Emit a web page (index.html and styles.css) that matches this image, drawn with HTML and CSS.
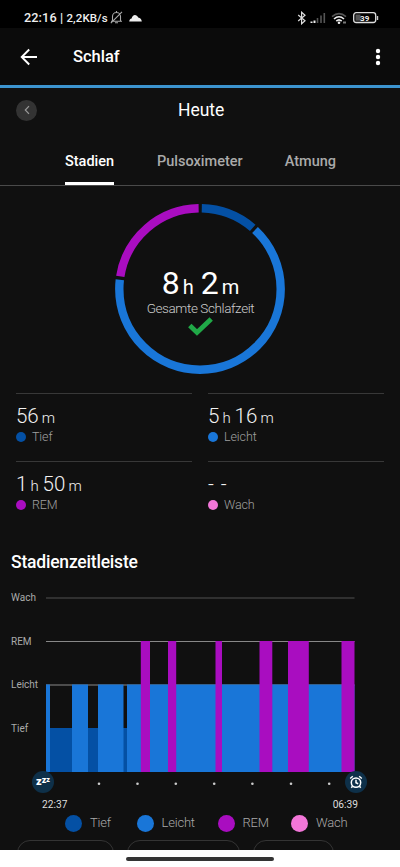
FILE: index.html
```html
<!DOCTYPE html>
<html lang="de">
<head>
<meta charset="utf-8">
<meta name="viewport" content="width=device-width, initial-scale=1">
<title>Schlaf</title>
<link rel="stylesheet" href="styles.css">
</head>
<body>
<div class="screen">
  <header class="status">
    <span class="status-text">22:16 | <span class="rate">2,2KB/s</span></span>
    <svg class="bell" width="13" height="13" viewBox="0 0 13 13" fill="none" stroke="#aaa" stroke-width="1.1"><path d="M2.5 10V5.5a4 4 0 0 1 8 0V10M1 10.2h11M5 11.8h3M6.5 0v1.5M.8 12.2 12 .8"/></svg>
    <svg class="cloud" width="13" height="8" viewBox="0 0 13 8" fill="#eee"><path d="M.2 7.600C.3 5.900 1.200 4.700 2.600 4.500 3.200 2.200 4.400.9 5.900.9c1.500 0 2.600.9 3.300 2.700 2 .3 3.400 1.800 3.600 4z"/></svg>
    <svg class="sys" width="84" height="14" viewBox="0 0 84 14" fill="none">
      <path d="M1.200 4 8 9.800 4.600 12.800V1.200L8 4.200 1.200 10" stroke="#ddd" stroke-width="1.200"/>
      <path d="M14.500 12v-1.500M17.500 12V9.500" stroke="#eee" stroke-width="2"/>
      <path d="M20.500 12V7M24 12V4.500M27.300 12V2" stroke="#555" stroke-width="1.600"/>
      <path d="M35 5.600q7-6 14 0" stroke="#555" stroke-width="1.500"/>
      <path d="M37 8q5-4.500 10 0M39.300 10.200q2.700-2.500 5.400 0" stroke="#eee" stroke-width="1.600"/>
      <circle cx="42" cy="11.800" r="1.300" fill="#eee"/><path d="M46 11.500h3" stroke="#777" stroke-width="2"/>
      <rect x="56.700" y="1.700" width="22" height="9.800" rx="2.500" stroke="#ddd" stroke-width="1.300"/>
      <rect x="58.500" y="3.500" width="5" height="6.200" fill="#555"/>
      <path d="M80.500 5v4" stroke="#ccc" stroke-width="1.400"/>
      <text class="battery-text" x="67.700" y="9.500" text-anchor="middle">39</text>
    </svg>
  </header>

  <div class="appbar">
    <svg width="18" height="18" viewBox="0 0 18 18" fill="none" stroke="#fff" stroke-width="1.900"><path d="M17 9H2M9.200 1.500 1.700 9l7.500 7.500"/></svg>
    <h1>Schlaf</h1>
    <svg class="more" width="6" height="18" viewBox="0 0 6 18" fill="#fff"><circle cx="3" cy="3" r="2.200"/><circle cx="3" cy="9" r="2.200"/><circle cx="3" cy="15" r="2.200"/></svg>
  </div>

  <div class="day">
    <span class="prev"><svg width="6" height="10" viewBox="0 0 6 10" fill="none" stroke="#999" stroke-width="1.200"><path d="M5 1.200 1.300 5 5 8.800"/></svg></span>
    <span class="today">Heute</span>
  </div>

  <nav class="tabs">
    <span class="tab active">Stadien</span>
    <span class="tab">Pulsoximeter</span>
    <span class="tab">Atmung</span>
  </nav>

  <section class="total">
    <svg class="ring" width="170" height="170" viewBox="-85 -85 170 170" fill="none" stroke-width="8.400">
      <g transform="rotate(-90)">
        <circle r="80.700" pathLength="360" stroke="#0450a4" stroke-dasharray="39.500 320.500" stroke-dashoffset="-1.300"/>
        <circle r="80.700" pathLength="360" stroke="#1976d8" stroke-dasharray="233.600 126.400" stroke-dashoffset="-43"/>
        <circle r="80.700" pathLength="360" stroke="#a90dc0" stroke-dasharray="80 280" stroke-dashoffset="-279"/>
      </g>
    </svg>
    <div class="total-text">
      <div class="big">8<small>h</small> 2<small>m</small></div>
      <div class="caption">Gesamte Schlafzeit</div>
      <svg class="check" width="25" height="19" viewBox="0 0 25 19" fill="none" stroke="#20a847" stroke-width="4.800"><path d="M1.800 8.500 9 15.500 23.200 2"/></svg>
    </div>
  </section>

  <section class="stats">
    <div class="stat"><div class="val">56<small>m</small></div><div class="lab"><i class="deep"></i>Tief</div></div>
    <div class="stat"><div class="val">5<small>h</small> 16<small>m</small></div><div class="lab"><i class="light"></i>Leicht</div></div>
    <div class="stat"><div class="val">1<small>h</small> 50<small>m</small></div><div class="lab"><i class="rem"></i>REM</div></div>
    <div class="stat"><div class="val none">- -</div><div class="lab"><i class="awake"></i>Wach</div></div>
  </section>

  <h2>Stadienzeitleiste</h2>

  <section class="chart">
    <div class="axis"><span>Wach</span><span>REM</span><span>Leicht</span><span>Tief</span></div>
    <div class="plot">
      <svg width="309" height="175" viewBox="0 0 309 175">
        <path d="M0 1h308.500" stroke="#505050"/>
        <path d="M0 44.500h308.500M0 88h308.500" stroke="#888"/>
        <g fill="#0450a4"><path d="M4 131h22v44H4zM42 131h10v44H42zM77 131h4v44h-4z"/></g>
        <g fill="#1976d8"><path d="M0 87.400h4v87.600H0zM26 87.400h16v87.600H26zM52 87.400h25.500v87.600H52zM81 87.400h227.500v87.600H81z"/></g>
        <g fill="#a90dc0"><path d="M94.800 44h9.200v131h-9.200zM122 44h8.200v131H122zM169.500 44h6.500v131h-6.500zM213.500 44h12.800v131h-12.800zM242 44h20.800v131H242zM295.500 44h13v131h-13z"/></g>
      </svg>
    </div>
  </section>

  <div class="ticks">
    <span class="badge zzz"><b>z</b><b>z</b><b>z</b></span>
    <svg class="dots" width="291" height="22" viewBox="54 0 291 22" fill="#ccc"><circle cx="99" cy="12.700" r="1.300"/><circle cx="137.500" cy="12.700" r="1.300"/><circle cx="175.800" cy="12.700" r="1.300"/><circle cx="214.200" cy="12.700" r="1.300"/><circle cx="252.400" cy="12.700" r="1.300"/><circle cx="291" cy="12.700" r="1.300"/><circle cx="329.200" cy="12.700" r="1.300"/></svg>
    <span class="badge"><svg width="14" height="14" viewBox="0 0 14 14" fill="none" stroke="#fff" stroke-width="1.500"><circle cx="7" cy="7.600" r="4.700"/><path d="M7 4.800v3l2.200 1M1.200 3.500 3.800 1.300M12.800 3.500 10.200 1.300M3.500 11.300 2.300 12.800M10.500 11.300l1.200 1.500"/></svg></span>
  </div>
  <div class="times"><span>22:37</span><span>06:39</span></div>

  <div class="legend">
    <span><i class="deep"></i>Tief</span><span><i class="light"></i>Leicht</span><span><i class="rem"></i>REM</span><span><i class="awake"></i>Wach</span>
  </div>

  <div class="chips"><span></span><span></span><span></span></div>
  <footer class="navbar"><span></span></footer>
</div>
</body>
</html>
```
FILE: styles.css
```css
* { box-sizing: border-box; }
body { margin: 0; background: #101010; font-family: Roboto, sans-serif; color: #fff; }
.screen { width: 400px; height: 867px; overflow: hidden; display: flex; flex-direction: column; background: #101010; }
.screen > * { flex-shrink: 0; }
svg { display: block; }
.deep { background: #0450a4; }
.light { background: #1976d8; }
.rem { background: #a90dc0; }
.awake { background: #f276d8; }

.status { height: 28px; background: #000; display: flex; align-items: center; padding: 7px 19px 0 24px; }
.status-text { font-size: 12.700px; font-weight: 500; line-height: 14px; width: 84px; padding-top: 1px; white-space: nowrap; color: #eee; letter-spacing: .1px; }
.rate { font-size: 11.500px; }
.bell { margin-left: 2px; }
.cloud { margin-left: 6px; }
.sys { margin-left: auto; }
.battery-text { font-size: 8px; font-weight: 700; fill: #eee; font-family: Roboto, sans-serif; }

.appbar { height: 60px; background: #0b0b0b; border-bottom: 3px solid #3c94cf; display: flex; align-items: center; padding: 0 19px 0 20px; }
h1 { margin: 0 0 0 35px; font-size: 16.500px; font-weight: 500; }
.more { margin-left: auto; }

.day { height: 44px; display: grid; grid-template-columns: 162px auto 1fr; align-items: center; padding: 0 0 0 16px; }
.prev { width: 21px; height: 21px; border-radius: 50%; background: #333; display: flex; align-items: center; justify-content: center; }
.today { font-size: 17.500px; letter-spacing: -.05px; line-height: 22px; padding-bottom: 1px; }

.tabs { height: 54px; border-bottom: 1px solid #4a4a4a; display: flex; padding-left: 65px; gap: 43px; font-size: 14.500px; font-weight: 500; color: #aaa; }
.tab { height: 53px; padding-top: 20px; line-height: 20px; }
.active { color: #fff; border-bottom: 3px solid #fff; width: 49px; }
.tab:nth-child(3) { margin-left: -1px; }

.total { height: 207px; display: grid; justify-items: center; padding-top: 18px; }
.ring, .total-text { grid-area: 1 / 1; }
.total-text { display: flex; flex-direction: column; align-items: center; padding-top: 62px; }
.big { font-size: 32px; line-height: 34px; height: 34px; white-space: pre; margin-left: 1px; word-spacing: -1px; }
.big small { font-size: 20px; margin-left: 3px; }
.caption { font-size: 13.500px; font-weight: 300; line-height: 16px; color: #ccc; letter-spacing: -.4px; margin-left: 1px; }
.check { margin: 1px 0 0 1px; }

.stats { display: grid; grid-template-columns: 176px 176px; column-gap: 16px; padding-left: 16px; height: 152px; grid-auto-rows: 68px; }
.stat { border-top: 1px solid #383838; padding-top: 10px; }
.val { font-size: 20.500px; font-weight: 300; line-height: 25px; height: 24px; color: #f2f2f2; word-spacing: -1px; }
.val small { font-size: 15px; margin-left: 3px; }
.val.none { word-spacing: 2px; }
.lab { display: flex; align-items: center; gap: 6px; font-size: 12.500px; font-weight: 300; line-height: 17px; color: #a0a0a0; letter-spacing: -.1px; }
.lab i { width: 10px; height: 10px; border-radius: 50%; }

h2 { margin: 0; height: 52px; padding: 6px 0 0 11px; font-size: 17.500px; line-height: 22px; font-weight: 500; letter-spacing: -.2px; }

.chart { height: 175px; display: flex; padding-left: 11px; }
.axis { width: 35px; font-size: 10px; line-height: 12px; color: #aaa; display: flex; flex-direction: column; gap: 31.700px; margin-top: -5px; }

.ticks { height: 23px; display: flex; padding-left: 32px; margin-top: -1px; position: relative; }
.badge { width: 22px; height: 22px; border-radius: 50%; background: #0e3049; display: flex; align-items: center; justify-content: center; }
.zzz b { font-size: 11px; line-height: 14px; font-weight: 900; }
.zzz b:nth-child(2) { font-size: 9px; margin-top: -4px; }
.zzz b:nth-child(3) { font-size: 7px; margin-top: -4px; }
.times { display: flex; justify-content: space-between; padding: 4px 42px 0; height: 20px; font-size: 10.200px; line-height: 14px; color: #ddd; }
.legend { height: 18px; display: grid; grid-template-columns: 71.500px 81px 73.500px auto; padding-left: 65px; font-size: 13px; font-weight: 300; line-height: 18px; color: #aaa; letter-spacing: -.2px; }
.legend span { display: flex; align-items: center; gap: 8px; }
.legend i { width: 17px; height: 17px; border-radius: 50%; }

.chips { height: 18px; display: grid; grid-template-columns: 97px 113px 81px; column-gap: 13px; padding: 8px 0 0 17px; overflow: hidden; }
.chips span { height: 26px; border: 1px solid #343434; border-radius: 13px; }
.navbar { height: 17px; background: #fff; display: flex; justify-content: center; padding-top: 7px; }
.navbar span { width: 148px; height: 4px; border-radius: 2px; background: #333; }
```
